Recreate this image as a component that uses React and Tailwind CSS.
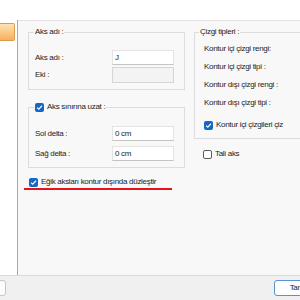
import React from "react";

function Check({ checked }) {
    if (!checked) {
        return <span className="w-[9px] h-[9px] shrink-0 rounded-[2px] border border-[#5c5c5c] bg-white" />;
    }
    return (
        <span className="w-[9px] h-[9px] shrink-0 rounded-[2px] bg-[#1467c4] flex items-center justify-center">
            <svg width="7" height="7" viewBox="0 0 8 8">
                <path d="M1.2 4.1 L3.2 6 L6.8 2" stroke="#fff" strokeWidth="1.3" fill="none" />
            </svg>
        </span>
    );
}

function Field({ label, value, disabled }) {
    return (
        <div className="flex items-center h-[15px]">
            <span className="w-[77px]">{label}</span>
            <div
                className={
                    disabled
                        ? "w-[62px] h-[16px] bg-[#f3f3f3] border border-[#d6d6d6]"
                        : "w-[62px] h-[15px] bg-white border border-[#e4e4e4] border-b-[#c4c4c4] pl-[2px] flex items-center"
                }
            >
                {value}
            </div>
        </div>
    );
}

export default function App() {
    return (
        <div className="w-[300px] h-[300px] overflow-hidden bg-white flex flex-col text-[8px] tracking-[-0.3px] text-[#1c1c1c] [font-family:'Liberation_Sans',Arial,sans-serif]">
            <div className="h-[20px] bg-white" />

            <div className="flex h-[255px]">
                {/* left list */}
                <div className="w-[18px] shrink-0 bg-white border-r border-[#a7a7ae]">
                    <div className="mt-[3px] h-[18px] w-[15px] bg-linear-to-b from-[#fde2b4] to-[#f6b05a] border border-l-0 border-[#dc9c4e] rounded-r-[2px]" />
                </div>

                {/* main panel */}
                <div className="flex-1 overflow-hidden bg-[#f8f8f8] border-t border-[#e3e3e3] pt-[6px] pl-[10px] flex gap-[9px]">
                    <div className="w-[157px] shrink-0 flex flex-col">
                        <fieldset className="border border-[#dcdcdc] min-w-0">
                            <legend className="ml-[5px] px-[1px] leading-[10px]">Aks adı :</legend>
                            <div className="flex flex-col gap-[2px] pt-[13px] pl-[6px] pb-[7px]">
                                <Field label="Aks adı :" value="J" />
                                <Field label="Eki :" disabled />
                            </div>
                        </fieldset>

                        <fieldset className="mt-[12px] border border-[#dcdcdc] min-w-0">
                            <legend className="ml-[5px] px-[1px] leading-[10px] flex items-center gap-[3px]">
                                <Check checked />
                                <span>Aks sınırına uzat :</span>
                            </legend>
                            <div className="flex flex-col gap-[5px] pt-[14px] pl-[6px] pb-[6px]">
                                <Field label="Sol delta :" value="0 cm" />
                                <Field label="Sağ delta :" value="0 cm" />
                            </div>
                        </fieldset>

                        <div className="mt-[9px] ml-[1px] h-[10px] flex items-center gap-[3px]">
                            <Check checked />
                            <span>Eğik aksları kontur dışında düzleştir</span>
                        </div>
                        <div className="mt-[1px] ml-[-4px] w-[148px] h-[2px] bg-[#e5141c]" />
                    </div>

                    <div className="w-[140px] shrink-0 flex flex-col">
                        <fieldset className="border border-[#dcdcdc] min-w-0">
                            <legend className="ml-[4px] px-[1px] leading-[10px]">Çizgi tipleri :</legend>
                            <div className="flex flex-col pt-[3px] pl-[9px] pb-[4px]">
                                <div className="h-[18px] flex items-center">Kontur içi çizgi rengi:</div>
                                <div className="h-[18px] flex items-center">Kontur içi çizgi tipi :</div>
                                <div className="h-[18px] flex items-center">Kontur dışı çizgi rengi :</div>
                                <div className="h-[18px] flex items-center">Kontur dışı çizgi tipi :</div>
                                <div className="mt-[4px] h-[18px] flex items-center gap-[3px]">
                                    <Check checked />
                                    <span>Kontur içi çizgileri çiz</span>
                                </div>
                            </div>
                        </fieldset>

                        <div className="mt-[10px] ml-[9px] h-[10px] flex items-center gap-[3px]">
                            <Check />
                            <span>Tali aks</span>
                        </div>
                    </div>
                </div>
            </div>

            {/* bottom buttons */}
            <div className="h-[25px] bg-[#f0f0f0] border-t border-[#dadada] flex items-center justify-between">
                <div className="ml-[-50px] w-[56px] h-[16px] bg-[#fdfdfd] border border-[#c6c6c6] rounded-[3px] flex items-center justify-center">
                    Önizle
                </div>
                <div className="mr-[-30px] w-[56px] h-[16px] bg-[#fdfdfd] border border-[#5d92d2] rounded-[3px] flex items-center justify-center">
                    Tamam
                </div>
            </div>
        </div>
    );
}
